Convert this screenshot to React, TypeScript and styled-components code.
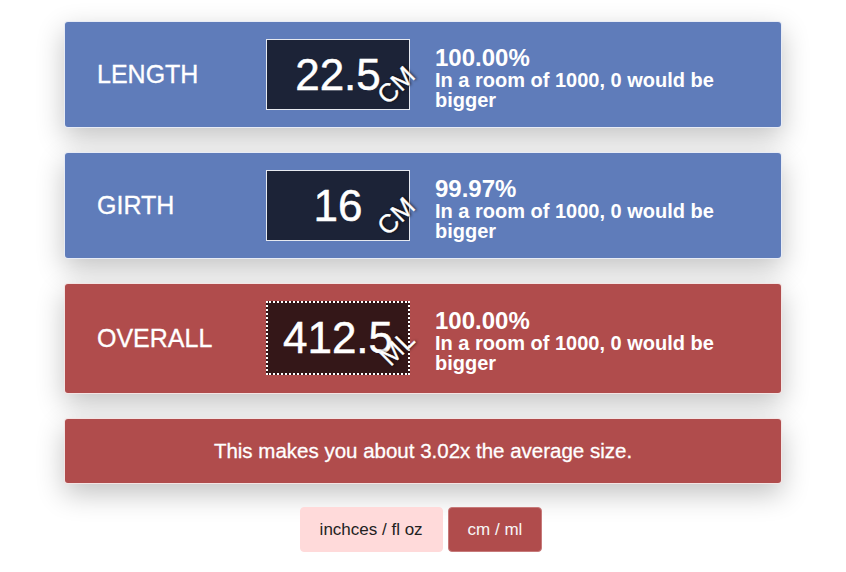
import * as React from 'react';
import styled, { createGlobalStyle } from 'styled-components';

const GlobalStyle = createGlobalStyle`
  body {
    margin: 0;
    background: #fff;
    font-family: "Liberation Sans", Arial, sans-serif;
    color: #fff;
  }
`;

const Page = styled.div`
  width: 718px;
  margin: 21px auto 0;
  display: flex;
  flex-direction: column;
  gap: 24px;
`;

const Card = styled.div`
  display: flex;
  align-items: center;
  padding: ${props => (props.tall ? '17px 32px 18px' : '17px 32px')};
  border: 1px solid rgba(255, 255, 255, 0.85);
  border-radius: 4px;
  background: ${props => props.color};
  box-shadow: 0 10px 28px rgba(0, 0, 0, 0.24);
`;

const Label = styled.div`
  width: 169px;
  font-size: 25px;
  line-height: 1;
  -webkit-text-stroke: 0.3px #fff;
`;

const ValueBox = styled.div`
  position: relative;
  width: 144px;
  height: ${props => (props.focused ? 74 : 71)}px;
  box-sizing: border-box;
  border: ${props => (props.focused ? '2px dotted #fff' : '1px solid #e6e9f0')};
  background: ${props => props.color};
  font-size: 44px;
  line-height: ${props => (props.focused ? 70 : 69)}px;
  text-align: center;
  -webkit-text-stroke: 0.5px #fff;
`;

const Unit = styled.span`
  position: absolute;
  top: 45px;
  left: 129px;
  font-size: 26px;
  line-height: 1;
  -webkit-text-stroke: 0.3px #fff;
  transform: translate(-50%, -50%) rotate(-45deg);
  text-shadow: 1px 1px 3px rgba(0, 0, 0, 0.75);
`;

const Info = styled.div`
  margin-left: 25px;
  margin-top: 6px;
  width: 300px;
  font-weight: bold;
`;

const Percent = styled.div`
  font-size: 24px;
  line-height: 24px;
`;

const Detail = styled.div`
  font-size: 20px;
  line-height: 20px;
`;

const Summary = styled(Card)`
  justify-content: center;
  padding: 21px 32px;
  font-size: 20.5px;
  line-height: 22px;
  -webkit-text-stroke: 0.3px #fff;
`;

const Toggle = styled.div`
  display: flex;
  justify-content: center;
  gap: 5px;
  margin: 23px 4px 20px 0;
`;

const UnitButton = styled.button`
  height: 45px;
  padding: 0 19px;
  border: 1px solid ${props => (props.active ? '#c77a7a' : '#ffdada')};
  border-radius: 4px;
  background: ${props => (props.active ? '#b04c4c' : '#ffdada')};
  color: ${props => (props.active ? '#f7f7f7' : '#222')};
  font-family: "Liberation Sans", Arial, sans-serif;
  font-size: 17px;
  cursor: pointer;
`;

const BLUE = '#5f7cba';
const RED = '#b04c4c';

const rows = [
  { label: 'LENGTH', value: '22.5', unit: 'CM', pct: '100.00%', color: BLUE, box: '#1c2337' },
  { label: 'GIRTH', value: '16', unit: 'CM', pct: '99.97%', color: BLUE, box: '#1c2337' },
  { label: 'OVERALL', value: '412.5', unit: 'ML', pct: '100.00%', color: RED, box: '#341718', focused: true },
];

export default function App() {
  const [metric, setMetric] = React.useState(true);

  return (
    <>
      <GlobalStyle />
      <Page>
        {rows.map(row => (
          <Card key={row.label} color={row.color} tall={row.focused}>
            <Label>{row.label}</Label>
            <ValueBox color={row.box} focused={row.focused}>
              {row.value}
              <Unit>{row.unit}</Unit>
            </ValueBox>
            <Info>
              <Percent>{row.pct}</Percent>
              <Detail>In a room of 1000, 0 would be bigger</Detail>
            </Info>
          </Card>
        ))}
        <Summary color={RED}>This makes you about 3.02x the average size.</Summary>
      </Page>
      <Toggle>
        <UnitButton active={!metric} onClick={() => setMetric(false)}>
          inchces / fl oz
        </UnitButton>
        <UnitButton active={metric} onClick={() => setMetric(true)}>
          cm / ml
        </UnitButton>
      </Toggle>
    </>
  );
}
